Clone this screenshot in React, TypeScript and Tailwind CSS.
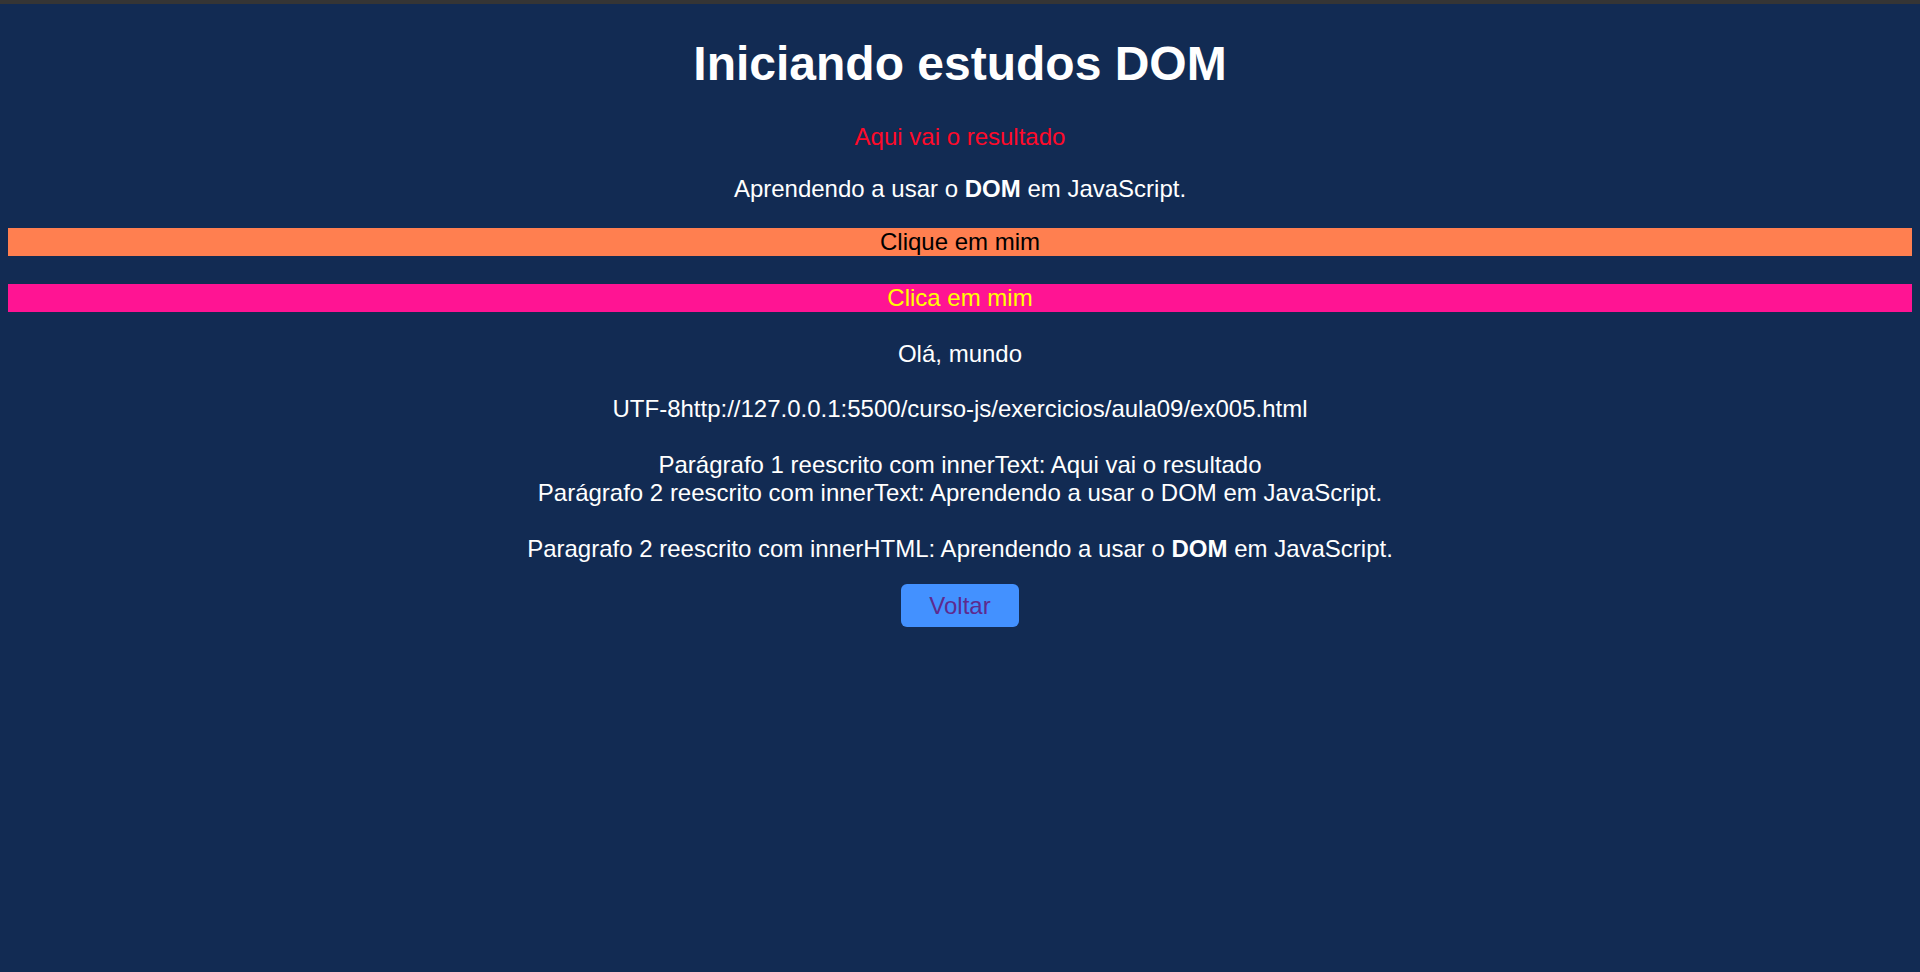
import React from "react";

const App: React.FC = () => {
  return (
    <div className="min-h-[972px] bg-[#122b53] font-['Liberation_Sans',Arial,sans-serif] text-white text-center">
      {/* faixa escura no topo */}
      <div className="h-[4px] bg-[#353535]" />

      <div className="px-[8px]">
        <h1 className="mt-[32px] text-[48px] leading-[55px] font-bold">Iniciando estudos DOM</h1>

        <p className="mt-[32px] text-[24px] leading-[28px] text-[#ff0a2a]">Aqui vai o resultado</p>
        <p className="mt-[24px] text-[24px] leading-[28px]">
          Aprendendo a usar o <strong>DOM</strong> em JavaScript.
        </p>

        <button className="mt-[25px] block w-full h-[28px] bg-[#ff7f50] text-[24px] leading-[28px] text-black">
          Clique em mim
        </button>
        <button className="mt-[28px] block w-full h-[28px] bg-[#ff1493] text-[24px] leading-[28px] text-[#ffff00]">
          Clica em mim
        </button>

        <div className="mt-[28px] text-[24px] leading-[28px]">
          <div>Olá, mundo</div>
          <div className="mt-[27px]">UTF-8http://127.0.0.1:5500/curso-js/exercicios/aula09/ex005.html</div>
          <div className="mt-[28px]">Parágrafo 1 reescrito com innerText: Aqui vai o resultado</div>
          <div>Parágrafo 2 reescrito com innerText: Aprendendo a usar o DOM em JavaScript.</div>
          <div className="mt-[28px]">
            Paragrafo 2 reescrito com innerHTML: Aprendendo a usar o <strong>DOM</strong> em JavaScript.
          </div>
        </div>

        <button className="mt-[21px] inline-block w-[118px] h-[43px] rounded-[6px] bg-[#4391ff] text-[24px] leading-[43px] text-[#5e2a8e]">
          Voltar
        </button>
      </div>
    </div>
  );
};

export default App;
